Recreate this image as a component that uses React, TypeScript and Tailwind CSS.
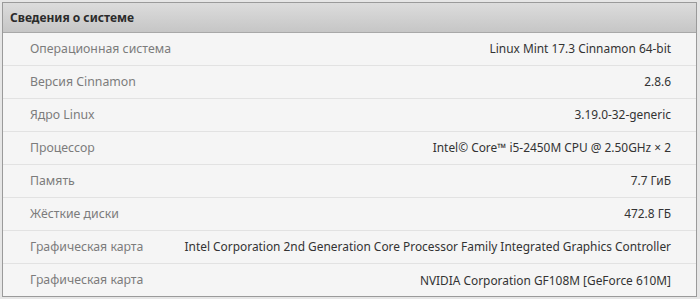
import React from "react";

const rows: [string, string][] = [
  ["Операционная система", "Linux Mint 17.3 Cinnamon 64-bit"],
  ["Версия Cinnamon", "2.8.6"],
  ["Ядро Linux", "3.19.0-32-generic"],
  ["Процессор", "Intel© Core™ i5-2450M CPU @ 2.50GHz × 2"],
  ["Память", "7.7 ГиБ"],
  ["Жёсткие диски", "472.8 ГБ"],
  ["Графическая карта", "Intel Corporation 2nd Generation Core Processor Family Integrated Graphics Controller"],
  ["Графическая карта", "NVIDIA Corporation GF108M [GeForce 610M]"],
];

export default function App() {
  return (
    <div
      className="w-[700px] h-[299px] bg-[#e6e6e6] p-[2px] pr-[3px] pb-[2px]"
      style={{ fontFamily: '"Noto Sans", "Open Sans", sans-serif' }}
    >
      <div className="h-full flex flex-col border border-[#9a9a9a] bg-[#f5f5f5]">
        <div className="h-[30px] shrink-0 flex items-center px-[7px] bg-gradient-to-b from-[#dcdcdc] to-[#c6c6c6] border-b border-[#a8a8a8]">
          <span className="text-[12px] font-bold text-[#2b2b2b]">Сведения о системе</span>
        </div>
        <div className="flex flex-col">
          {rows.map(([label, value], i) => (
            <div
              key={i}
              className={`h-[33px] flex items-center justify-between pl-[27px] pr-[25px] ${
                i < rows.length - 1 ? "border-b border-[#e2e2e2]" : ""
              }`}
            >
              <span className="text-[12.3px] text-[#7c7c7c]">{label}</span>
              <span className="text-[11.9px] text-[#333333]">{value}</span>
            </div>
          ))}
        </div>
      </div>
    </div>
  );
}
